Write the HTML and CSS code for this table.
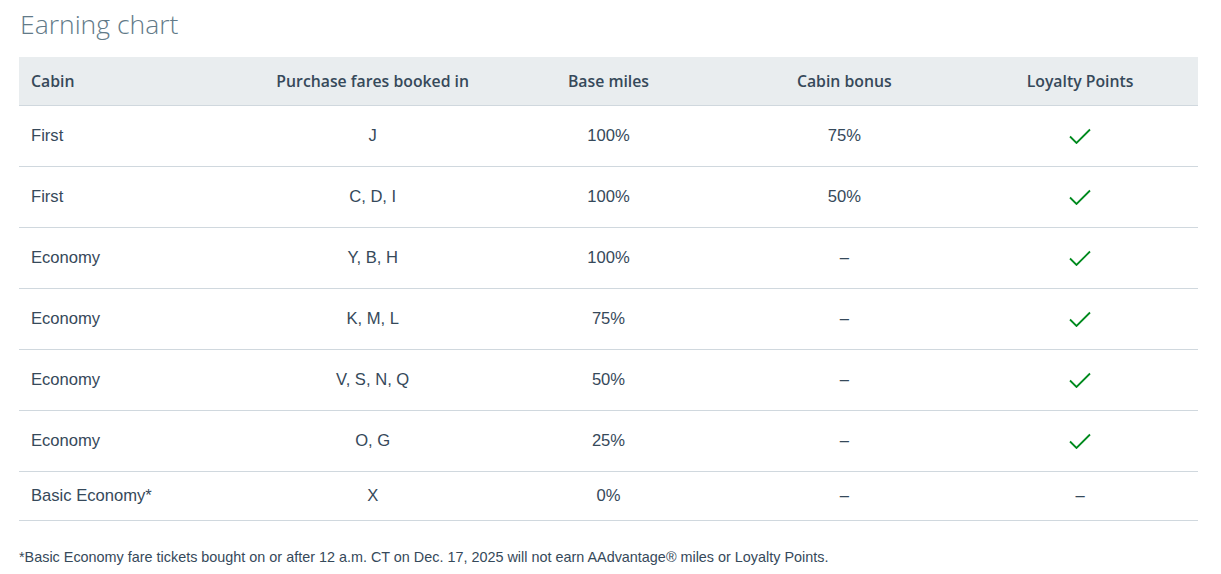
FILE: index.html
```html
<!DOCTYPE html>
<html lang="en">
<head>
<meta charset="utf-8">
<title>Earning chart</title>
<link rel="stylesheet" href="styles.css">
</head>
<body>
<section class="chart">
  <h2 class="title">Earning chart</h2>
  <table class="earn">
    <thead>
      <tr>
        <th class="left">Cabin</th>
        <th>Purchase fares booked in</th>
        <th>Base miles</th>
        <th>Cabin bonus</th>
        <th>Loyalty Points</th>
      </tr>
    </thead>
    <tbody>
      <tr><td class="left">First</td><td>J</td><td>100%</td><td>75%</td><td><svg class="check" viewBox="0 0 22 16" width="22" height="16"><path d="M1 8.5 L7.5 15 L21 1.5"/></svg></td></tr>
      <tr><td class="left">First</td><td>C, D, I</td><td>100%</td><td>50%</td><td><svg class="check" viewBox="0 0 22 16" width="22" height="16"><path d="M1 8.5 L7.5 15 L21 1.5"/></svg></td></tr>
      <tr><td class="left">Economy</td><td>Y, B, H</td><td>100%</td><td>–</td><td><svg class="check" viewBox="0 0 22 16" width="22" height="16"><path d="M1 8.5 L7.5 15 L21 1.5"/></svg></td></tr>
      <tr><td class="left">Economy</td><td>K, M, L</td><td>75%</td><td>–</td><td><svg class="check" viewBox="0 0 22 16" width="22" height="16"><path d="M1 8.5 L7.5 15 L21 1.5"/></svg></td></tr>
      <tr><td class="left">Economy</td><td>V, S, N, Q</td><td>50%</td><td>–</td><td><svg class="check" viewBox="0 0 22 16" width="22" height="16"><path d="M1 8.5 L7.5 15 L21 1.5"/></svg></td></tr>
      <tr><td class="left">Economy</td><td>O, G</td><td>25%</td><td>–</td><td><svg class="check" viewBox="0 0 22 16" width="22" height="16"><path d="M1 8.5 L7.5 15 L21 1.5"/></svg></td></tr>
      <tr class="short"><td class="left">Basic Economy*</td><td>X</td><td>0%</td><td>–</td><td>–</td></tr>
    </tbody>
  </table>
  <p class="note">*Basic Economy fare tickets bought on or after 12 a.m. CT on Dec. 17, 2025 will not earn AAdvantage® miles or Loyalty Points.</p>
</section>
</body>
</html>
```

FILE: styles.css
```css
html, body {
  margin: 0;
  padding: 0;
  background: #ffffff;
}

.chart {
  padding: 0 23px 0 19px;
  font-family: "Liberation Sans", Arial, sans-serif;
  color: #36495a;
}

.title {
  margin: 0;
  padding: 6px 0 0 1px;
  height: 57px;
  box-sizing: border-box;
  font-family: "Open Sans", "Noto Sans", sans-serif;
  font-weight: 300;
  font-size: 26.5px;
  line-height: 36px;
  color: #627a88;
}

.earn {
  width: 1179px;
  border-collapse: collapse;
  table-layout: fixed;
}

.earn th {
  height: 48px;
  padding: 0 12px;
  background: #e9edef;
  font-family: "Open Sans", "Noto Sans", sans-serif;
  font-weight: 600;
  font-size: 15.8px;
  color: #36495a;
  text-align: center;
  border-bottom: 1px solid #d0d8de;
  box-sizing: border-box;
}

.earn td {
  height: 61px;
  padding: 0 12px;
  font-size: 16.6px;
  text-align: center;
  border-bottom: 1px solid #d0d8de;
  box-sizing: border-box;
  vertical-align: middle;
}

.earn tr.short td {
  height: 49px;
}

.earn .left {
  text-align: left;
}

.check {
  display: block;
  margin: 0 auto;
  fill: none;
  stroke: #008a1e;
  stroke-width: 1.8;
}

.note {
  margin: 28px 0 0;
  font-size: 14.4px;
  line-height: 16px;
  color: #36495a;
}
```
